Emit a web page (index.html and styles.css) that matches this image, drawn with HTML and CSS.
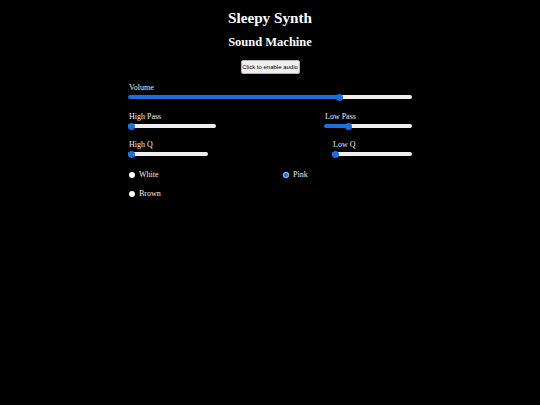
FILE: index.html
```html
<!DOCTYPE html>
<html>
<head>
<meta charset="utf-8">
<link rel="stylesheet" href="styles.css">
</head>
<body>
<main class="app">
  <h1 class="title">Sleepy Synth</h1>
  <h2 class="subtitle">Sound Machine</h2>
  <div class="btn-row"><button class="enable-btn">Click to enable audio</button></div>
  <section class="controls">
    <div class="control control-full">
      <label class="ctl-label">Volume</label>
      <input class="slider" type="range" min="0" max="100" value="75" style="--p:75%">
    </div>
    <div class="pair pair-first">
      <div class="control w88">
        <label class="ctl-label">High Pass</label>
        <input class="slider" type="range" min="0" max="100" value="0" style="--p:0%">
      </div>
      <div class="control w88">
        <label class="ctl-label">Low Pass</label>
        <input class="slider" type="range" min="0" max="100" value="26" style="--p:26%">
      </div>
    </div>
    <div class="pair pair-second">
      <div class="control w80">
        <label class="ctl-label">High Q</label>
        <input class="slider" type="range" min="0" max="100" value="0" style="--p:0%">
      </div>
      <div class="control w80">
        <label class="ctl-label">Low Q</label>
        <input class="slider" type="range" min="0" max="100" value="0" style="--p:0%">
      </div>
    </div>
    <div class="noise-grid">
      <label class="radio-item"><input type="radio" name="noise" class="radio"><span>White</span></label>
      <label class="radio-item"><input type="radio" name="noise" class="radio" checked><span>Pink</span></label>
      <label class="radio-item"><input type="radio" name="noise" class="radio"><span>Brown</span></label>
    </div>
  </section>
</main>
</body>
</html>
```

FILE: styles.css
```css
html, body {
  margin: 0;
  padding: 0;
  background: #000;
}
body {
  width: 540px;
  height: 405px;
  color: #fff;
  font-family: "Liberation Serif", "Times New Roman", serif;
}
.app {
  width: 284px;
  margin: 0 auto;
  padding-top: 9px;
}
.title {
  margin: 0;
  font-size: 15.2px;
  line-height: 18px;
  font-weight: bold;
  text-align: center;
}
.subtitle {
  margin: 7px 0 0;
  font-size: 12.5px;
  line-height: 16px;
  font-weight: bold;
  text-align: center;
}
.btn-row {
  display: flex;
  justify-content: center;
  margin-top: 10px;
}
.enable-btn {
  width: 59px;
  height: 14px;
  padding: 0;
  white-space: nowrap;
  font-family: "Liberation Sans", Arial, sans-serif;
  font-size: 6px;
  line-height: 12px;
  color: #000;
  background: #efefef;
  border: 1px solid #b5b5b5;
  border-radius: 2px;
}
.controls {
  margin-top: 9px;
  display: flex;
  flex-direction: column;
}
.control {
  display: flex;
  flex-direction: column;
}
.control-full { width: 284px; }
.w88 { width: 88px; }
.w80 { width: 80px; }
.pair {
  display: flex;
  justify-content: space-between;
}
.pair-first { margin-top: 12px; }
.pair-second { margin-top: 11px; }
.ctl-label {
  font-size: 8px;
  line-height: 10px;
  color: #eee;
  padding-left: 1px;
}
.slider {
  -webkit-appearance: none;
  appearance: none;
  margin: 1px 0 0;
  height: 6px;
  width: 100%;
  background: transparent;
}
.slider::-webkit-slider-runnable-track {
  height: 4px;
  border-radius: 2px;
  background: linear-gradient(to right, #1a6fe0 0, #1a6fe0 var(--p), #efefef var(--p), #efefef 100%);
}
.slider::-webkit-slider-thumb {
  -webkit-appearance: none;
  appearance: none;
  width: 7px;
  height: 7px;
  margin-top: -1.5px;
  border-radius: 50%;
  background: #1a6fe0;
  border: none;
}
.noise-grid {
  display: grid;
  grid-template-columns: 154px 1fr;
  row-gap: 8px;
  margin-top: 12px;
}
.radio-item {
  display: flex;
  align-items: center;
  gap: 4px;
  height: 11px;
  font-size: 8px;
  color: #eee;
  padding-left: 1px;
}
.radio {
  -webkit-appearance: none;
  appearance: none;
  margin: 0;
  width: 6px;
  height: 6px;
  border-radius: 50%;
  background: #fff;
  border: none;
}
.radio:checked {
  background: #1a6fe0;
  box-shadow: inset 0 0 0 1px #8fb8f0, inset 0 0 0 2px #1a6fe0;
}
```
